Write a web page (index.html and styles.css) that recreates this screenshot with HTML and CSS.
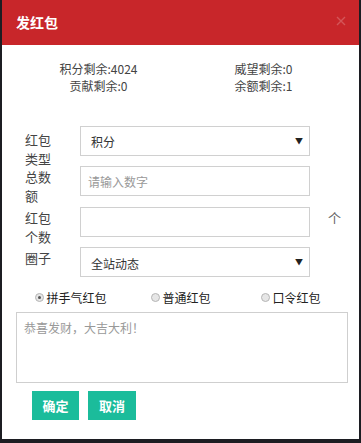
FILE: index.html
```html
<!DOCTYPE html>
<html lang="zh-CN">
<head>
<meta charset="utf-8">
<title>发红包</title>
<link rel="stylesheet" href="styles.css">
</head>
<body>
<div class="dialog">
  <div class="header">
    <span class="title">发红包</span>
    <svg class="close" width="10" height="10" viewBox="0 0 10 10"><path d="M1 1L9 9M9 1L1 9" stroke="currentColor" stroke-width="1.4" fill="none"/></svg>
  </div>
  <div class="content">
    <div class="stats">
      <div class="stat-col"><div>积分剩余:4024</div><div>贡献剩余:0</div></div>
      <div class="stat-col"><div>威望剩余:0</div><div>余额剩余:1</div></div>
    </div>
    <div class="form">
      <div class="row">
        <div class="label">红包类型</div>
        <div class="field select"><span>积分</span><span class="arrow">▼</span></div>
      </div>
      <div class="row">
        <div class="label">总数额</div>
        <div class="field input"><span class="ph">请输入数字</span></div>
      </div>
      <div class="row">
        <div class="label">红包个数</div>
        <div class="field input"></div>
        <div class="unit">个</div>
      </div>
      <div class="row">
        <div class="label">圈子</div>
        <div class="field select low"><span>全站动态</span><span class="arrow">▼</span></div>
      </div>
    </div>
    <div class="radios">
      <label class="radio"><span class="dot checked"></span>拼手气红包</label>
      <label class="radio"><span class="dot"></span>普通红包</label>
      <label class="radio"><span class="dot"></span>口令红包</label>
    </div>
    <div class="textarea"><span class="ph">恭喜发财，大吉大利！</span></div>
    <div class="buttons">
      <div class="btn">确定</div>
      <div class="btn wide">取消</div>
    </div>
  </div>
</div>
</body>
</html>
```

FILE: styles.css
```css
html, body {
  margin: 0;
  padding: 0;
}
body {
  background: #1c1d22;
  font-family: "Noto Sans CJK SC", "Noto Sans", sans-serif;
  color: #444;
  width: 361px;
  height: 443px;
  overflow: hidden;
}
.dialog {
  margin-left: 2px;
  width: 357px;
  height: 439px;
  background: #fff;
}
.header {
  height: 45px;
  background: #c8262a;
  display: flex;
  align-items: center;
  justify-content: space-between;
  padding: 0 14px 0 14px;
}
.title {
  color: #fff;
  font-size: 14px;
  font-weight: bold;
  margin-top: -2px;
}
.close {
  color: rgba(255, 255, 255, 0.22);
  margin-top: -4px;
  margin-right: -1px;
}
.content {
  padding: 0 13px 0 14px;
}
.stats {
  display: grid;
  grid-template-columns: 165px 165px;
  padding-top: 15px;
  font-size: 12px;
  line-height: 17px;
  color: #444;
  text-align: center;
}
.form {
  margin-top: 32px;
}
.row {
  display: grid;
  grid-template-columns: 55px 230px auto;
  padding-left: 9px;
  height: 30px;
  margin-bottom: 10.4px;
}
.label {
  width: 28px;
  font-size: 13px;
  line-height: 19px;
  color: #444;
  padding-top: 1px;
}
.row:first-child .label {
  padding-top: 4px;
}
.field {
  box-sizing: border-box;
  height: 30px;
  border: 1px solid #d0d0d0;
  font-size: 12px;
  display: flex;
  align-items: center;
}
.select {
  justify-content: space-between;
  padding: 0 6px 0 10px;
  color: #333;
}
.select.low span:first-child {
  margin-top: 2px;
}
.arrow {
  font-size: 8px;
  color: #222;
  margin-top: -2px;
}
.input {
  padding-left: 7px;
}
.ph {
  color: #999;
}
.unit {
  font-size: 13px;
  color: #666;
  padding-left: 18px;
  padding-top: 1px;
  line-height: 19px;
}
.radios {
  display: grid;
  grid-template-columns: 110px 110px 110px;
  margin-top: -2px;
  height: 24px;
  align-items: center;
}
.radio {
  display: flex;
  align-items: center;
  justify-content: center;
  font-size: 12px;
  color: #222;
}
.dot {
  box-sizing: border-box;
  width: 9px;
  height: 9px;
  border-radius: 50%;
  border: 1px solid #b5b5b5;
  background: #e6e6e6;
  margin-right: 2px;
  display: flex;
  align-items: center;
  justify-content: center;
}
.dot.checked::after {
  content: "";
  width: 3px;
  height: 3px;
  border-radius: 50%;
  background: #555;
}
.textarea {
  box-sizing: border-box;
  margin-top: 2px;
  width: 332px;
  height: 71px;
  border: 1px solid #cfcfcf;
  padding: 6px 7px;
  font-size: 12px;
  line-height: 18px;
}
.buttons {
  display: flex;
  gap: 9px;
  padding-left: 16px;
  margin-top: 8px;
}
.btn {
  width: 47px;
  height: 29px;
  background: #1bbc9b;
  color: #fff;
  font-size: 13px;
  font-weight: bold;
  display: flex;
  align-items: center;
  justify-content: center;
}
.btn.wide {
  width: 48px;
}
```
